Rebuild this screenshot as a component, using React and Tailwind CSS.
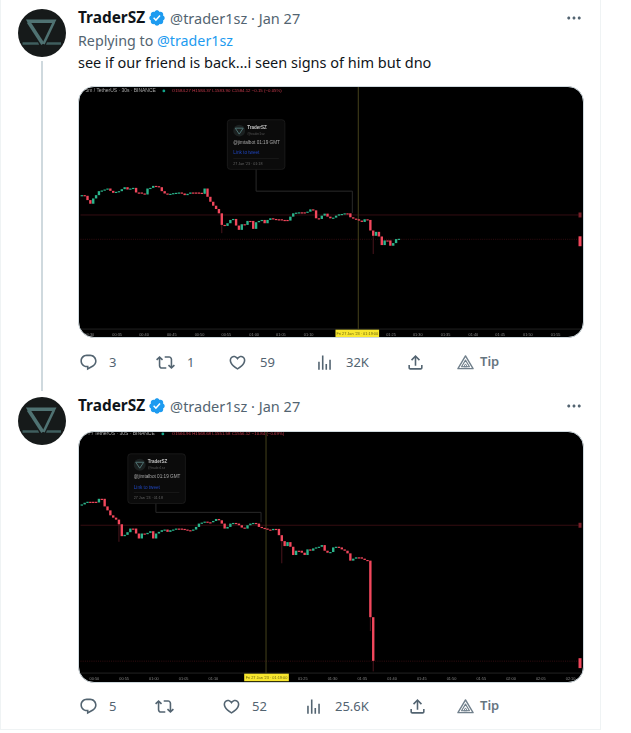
const paths = {
  reply: 'M1.751 10c0-4.42 3.584-8 8.005-8h4.366c4.49 0 8.129 3.64 8.129 8.13 0 2.96-1.607 5.68-4.196 7.11l-8.054 4.46v-3.69h-.067c-4.49.1-8.183-3.51-8.183-8.01zm8.005-6c-3.317 0-6.005 2.69-6.005 6 0 3.37 2.77 6.08 6.138 6.01l.351-.01h1.761v2.3l5.087-2.81c1.951-1.08 3.163-3.13 3.163-5.36 0-3.39-2.744-6.13-6.129-6.13H9.756z',
  retweet: 'M4.5 3.88l4.432 4.14-1.364 1.46L5.5 7.55V16c0 1.1.896 2 2 2H13v2H7.5c-2.209 0-4-1.79-4-4V7.55L1.432 9.48.068 8.02 4.5 3.88zM16.5 6H11V4h5.5c2.209 0 4 1.79 4 4v8.45l2.068-1.93 1.364 1.46-4.432 4.14-4.432-4.14 1.364-1.46 2.068 1.93V8c0-1.1-.896-2-2-2z',
  heart: 'M16.697 5.5c-1.222-.06-2.679.51-3.89 2.16l-.805 1.09-.806-1.09C9.984 6.01 8.526 5.44 7.304 5.5c-1.243.07-2.349.78-2.91 1.91-.552 1.12-.633 2.78.479 4.82 1.074 1.97 3.257 4.27 7.129 6.61 3.87-2.34 6.052-4.64 7.126-6.61 1.111-2.04 1.03-3.7.477-4.82-.561-1.13-1.666-1.84-2.908-1.91zm4.187 7.69c-1.351 2.48-4.001 5.12-8.379 7.67l-.503.3-.504-.3c-4.379-2.55-7.029-5.19-8.382-7.67-1.36-2.5-1.41-4.86-.514-6.67.887-1.79 2.647-2.91 4.601-3.01 1.651-.09 3.368.56 4.798 2.01 1.429-1.45 3.146-2.1 4.796-2.01 1.954.1 3.714 1.22 4.601 3.01.896 1.81.846 4.17-.514 6.67z',
  views: 'M8.75 21V3h2v18h-2zM18 21V8.5h2V21h-2zM4 21l.004-10h2L6 21H4zm9.248 0v-7h2v7h-2z',
  share: 'M12 2.59l5.7 5.7-1.41 1.42L13 6.41V16h-2V6.41l-3.3 3.3-1.41-1.42L12 2.59zM21 15l-.02 3.51c0 1.38-1.12 2.49-2.5 2.49H5.5C4.11 21 3 19.88 3 18.5V15h2v3.5c0 .28.22.5.5.5h12.98c.28 0 .5-.22.5-.5L19 15h2z',
  badge: 'M22.25 12c0-1.43-.88-2.67-2.19-3.34.46-1.39.2-2.9-.81-3.91s-2.52-1.27-3.91-.81c-.66-1.31-1.91-2.19-3.34-2.19s-2.67.88-3.33 2.19c-1.4-.46-2.91-.2-3.92.81s-1.26 2.52-.8 3.91c-1.31.67-2.2 1.91-2.2 3.34s.89 2.67 2.2 3.34c-.46 1.39-.21 2.9.8 3.91s2.52 1.26 3.91.81c.67 1.31 1.91 2.19 3.34 2.19s2.68-.88 3.34-2.19c1.39.45 2.9.2 3.91-.81s1.27-2.52.81-3.91c1.31-.67 2.19-1.91 2.19-3.34zm-11.71 4.2L6.8 12.46l1.41-1.42 2.26 2.26 4.8-5.23 1.47 1.36-6.2 6.77z',
  more: 'M3 12c0-1.1.9-2 2-2s2 .9 2 2-.9 2-2 2-2-.9-2-2zm9 2c1.1 0 2-.9 2-2s-.9-2-2-2-2 .9-2 2 .9 2 2 2zm7 0c1.1 0 2-.9 2-2s-.9-2-2-2-2 .9-2 2 .9 2 2 2z',
}

// candle closes, in 3x crop units
const series1 = [330,332,345,356,340,330,318,316,313,310,317,323,320,318,312,306,313,310,308,322,322,325,328,310,308,302,303,306,318,325,328,326,324,323,322,325,330,326,322,322,322,323,326,310,335,350,362,372,385,420,423,415,405,402,422,435,418,420,408,408,432,412,408,405,415,405,400,402,403,403,405,405,407,395,385,383,382,382,383,380,373,376,400,402,392,386,395,400,398,392,388,387,385,385,397,401,403,407,411,403,405,437,453,441,455,481,467,467,483,475,463,462]
const series2 = [222,217,214,214,214,216,205,205,228,240,255,262,268,282,318,314,306,295,295,310,325,310,312,308,303,325,310,305,300,298,305,300,298,295,295,296,298,300,300,298,290,280,277,274,276,276,272,266,270,280,295,290,280,278,280,285,292,295,285,280,278,280,290,293,295,298,300,296,296,315,333,348,336,350,375,362,362,368,375,358,362,355,352,350,345,362,368,366,352,350,352,358,362,370,392,386,382,382,386,390,392,563,695]

function Candles({ closes, step, wicks }) {
  return closes.map((c, i) => {
    const x = 1.3 + i * step
    const open = i === 0 ? c + 2 : closes[i - 1]
    const up = c < open
    const top = Math.min(c, open) / 3 - 1
    const bottom = Math.max(c, open) / 3 - 1
    const color = up ? '#2bb58c' : '#f2475c'
    return (
      <g key={i}>
        {wicks[i] && <line x1={x} x2={x} y1={bottom} y2={wicks[i] / 3 - 1} stroke="#5e1a24" strokeWidth="0.8" />}
        <rect x={x - 1.2} y={top} width="2.4" height={Math.max(bottom - top, 1.2)} fill={color} />
      </g>
    )
  })
}

function Tooltip({ x, y }) {
  return (
    <g transform={`translate(${x} ${y})`} fontFamily="'Liberation Sans', sans-serif">
      <rect x="0" y="0" width="58" height="50" rx="3" fill="#0b0b0b" stroke="#222222" strokeWidth="0.7" />
      <circle cx="12" cy="11" r="6" fill="#1b2020" />
      <path d="M8 8.5h8l-4 6z" fill="none" stroke="#4f7272" strokeWidth="1" />
      <text x="20" y="9.5" fontSize="4.6" fontWeight="700" fill="#c4c4c4">TraderSZ</text>
      <text x="20" y="15.5" fontSize="3.4" fill="#555555">@trader1sz</text>
      <text x="6" y="24.5" fontSize="4.7" fill="#a8a8a8">@jimtalbot 01:19 GMT</text>
      <text x="6" y="35" fontSize="4.7" fill="#1f46c0">Link to tweet</text>
      <line x1="6" x2="52" y1="39" y2="39" stroke="#222222" strokeWidth="0.6" />
      <text x="6" y="46" fontSize="3.7" fill="#666666">27 Jan '23 · 01:18</text>
    </g>
  )
}

function Chart({ data }) {
  const h = data.height
  return (
    <div className="h-[252px] overflow-hidden rounded-2xl border border-[#cfd9de] bg-black">
      <svg viewBox={`0 0 505 ${h}`} className="block h-full w-full blur-[0.3px]" fontFamily="'Liberation Sans', sans-serif">
        <text x={data.titleX} y={data.legendY} fontSize="5" fill="#a8a8a8">{data.title}</text>
        <circle cx={data.dotX} cy={data.legendY - 1.5} r="1.4" fill="#12a58a" />
        <text x={data.ohlcX} y={data.legendY} fontSize="4.4" fill="#c63a4c">{data.ohlc}</text>

        <line x1="0" x2="502" y1={data.lineY} y2={data.lineY} stroke="#421016" strokeWidth="0.8" />
        <line x1="0" x2="502" y1={data.dotY} y2={data.dotY} stroke="#421016" strokeWidth="0.8" strokeDasharray="1 1.2" />
        <rect x="502" y={data.lineY - 2.5} width="3" height="5" fill="#7a2029" />
        <rect x="502" y={data.dotY - 3} width="3" height="10" fill="#f2475c" />

        <path d={data.connector} fill="none" stroke="#2e2e2e" strokeWidth="0.9" />
        <Tooltip x={data.tipX} y={data.tipY} />
        <line x1={data.crossX} x2={data.crossX} y1="0" y2={data.axisY} stroke="#4d4a1f" strokeWidth="0.9" />
        <Candles closes={data.closes} step={data.step} wicks={data.wicks} />

        <line x1="0" x2="505" y1={data.axisY} y2={data.axisY} stroke="#2b2b2b" strokeWidth="0.8" />
        {data.ticks.map(([label, x]) => (
          <text key={label} x={x} y={data.axisY + 6.5} fontSize="3.9" textAnchor="middle" fill="#8a8a8a">{label}</text>
        ))}
        <rect x={data.yellowX} y={data.axisY + 0.6} width={data.yellowW} height="7.6" fill="#f7e62e" />
        <text x={data.yellowX + data.yellowW / 2} y={data.axisY + 6} fontSize="3.9" textAnchor="middle" fill="#6b6410">Fri 27 Jan '23 · 01:19:00</text>
      </svg>
    </div>
  )
}

function Icon({ d, className }) {
  return (
    <svg viewBox="0 0 24 24" className={className} fill="currentColor">
      <path d={d} />
    </svg>
  )
}

function TipIcon() {
  return (
    <svg viewBox="0 0 18 18" className="h-[17px] w-[17px]" fill="none" stroke="currentColor" strokeWidth="1.5" strokeLinejoin="round">
      <path d="M9 2L17 15.5H1z" />
      <path d="M9 6.5l4.2 7H4.8z" strokeWidth="1.2" />
      <path d="M9 10.5l1.8 3H7.2z" strokeWidth="1" />
    </svg>
  )
}

function Avatar() {
  return (
    <svg viewBox="0 0 48 48" className="h-12 w-12 shrink-0 rounded-full bg-[#161a1a]">
      <path d="M8 10.5h30.5l-1.8 3.5H9.8z" fill="#4f7272" />
      <path d="M10.5 13L24.8 35" stroke="#4f7272" strokeWidth="3.6" />
      <path d="M36 13L25.5 35" stroke="#4f7272" strokeWidth="2.6" />
      <path d="M4.5 33.2H20l1.2 2.6H4.5zM43 33.2H29l-1 2.6h15z" fill="#3f5e5e" />
    </svg>
  )
}

function Action({ icon, label, className }) {
  return (
    <div className={`flex items-center ${className}`}>
      {icon}
      {label && <span className="text-[13px] leading-4">{label}</span>}
    </div>
  )
}

function Actions({ items, className }) {
  return (
    <div className={`flex h-6 items-center text-[#536471] ${className}`}>
      <Action className={items[0].className} label={items[0].label} icon={<Icon d={paths.reply} className={`h-[19px] w-[19px] ${items[0].iconGap}`} />} />
      <Action className={items[1].className} label={items[1].label} icon={<Icon d={paths.retweet} className={`h-[19px] w-[19px] ${items[1].iconGap}`} />} />
      <Action className={items[2].className} label={items[2].label} icon={<Icon d={paths.heart} className={`h-[19px] w-[19px] ${items[2].iconGap}`} />} />
      <Action className={items[3].className} label={items[3].label} icon={<Icon d={paths.views} className={`h-[19px] w-[19px] ${items[3].iconGap}`} />} />
      <Action className={items[4].className} icon={<Icon d={paths.share} className="h-[19px] w-[19px]" />} />
      <div className="flex items-center gap-1.5 text-[#71808c]">
        <TipIcon />
        <span className="-mt-0.5 text-[13px] font-semibold leading-4 text-[#66757f]">Tip</span>
      </div>
    </div>
  )
}

function Header() {
  return (
    <div className="flex h-5 items-center leading-5">
      <span className="text-[15.4px] font-bold text-[#0f1419]">TraderSZ</span>
      <Icon d={paths.badge} className="ml-[3px] h-[18px] w-[18px] text-[#1d9bf0]" />
      <span className="ml-1 text-[14.5px] text-[#536471]">@trader1sz · Jan 27</span>
      <Icon d={paths.more} className="ml-auto mr-[1px] h-[18px] w-[18px] text-[#536471]" />
    </div>
  )
}

const chart1 = {
  height: 252,
  title: '5m / TetherUS · 30s · BINANCE',
  titleX: 5,
  legendY: 5.5,
  dotX: 84,
  ohlc: 'O1584.27 H1584.37 L1583.90 C1584.12 −0.15 (−0.05%)',
  ohlcX: 92,
  lineY: 129,
  dotY: 153.5,
  axisY: 244,
  crossX: 280,
  tipX: 148,
  tipY: 33,
  connector: 'M177 83V105H274V127',
  closes: series1,
  step: 2.88,
  wicks: { 49: 445, 102: 508 },
  yellowX: 257,
  yellowW: 44,
  ticks: [['00:30', 9], ['00:35', 37], ['00:40', 64], ['00:45', 92], ['00:50', 120], ['00:55', 147], ['01:00', 175], ['01:05', 202], ['01:10', 230], ['01:25', 313], ['01:30', 340], ['01:35', 368], ['01:40', 396], ['01:45', 423], ['01:50', 451], ['01:55', 479]],
}

const chart2 = {
  height: 252,
  title: 'TT / TetherUS · 30S · BINANCE',
  titleX: 4,
  legendY: 3.4,
  dotX: 83,
  ohlc: 'O1566.96 H1568.68 L1551.58 C1556.12 −10.84 (−0.69%)',
  ohlcX: 92,
  lineY: 94,
  dotY: 231,
  axisY: 243,
  crossX: 187,
  tipX: 47.7,
  tipY: 22,
  connector: 'M76 72V81H182V91',
  closes: series2,
  step: 2.88,
  wicks: { 13: 335, 70: 400, 101: 605, 102: 727 },
  yellowX: 165,
  yellowW: 45,
  ticks: [['00:50', 14], ['00:55', 44], ['01:00', 74], ['01:05', 104], ['01:10', 134], ['01:25', 224], ['01:30', 254], ['01:35', 284], ['01:40', 314], ['01:45', 344], ['01:50', 374], ['01:55', 404], ['02:00', 434], ['02:05', 464], ['02:10', 494]],
}

export default function App() {
  return (
    <div className="h-[733px] w-[631px] overflow-hidden bg-white font-['Noto_Sans',sans-serif]">
      <div className="h-[730px] w-[601px] border-x border-b border-[#eff3f4]">
        <article className="flex pl-[17px] pr-4 pt-2">
          <div className="mr-3 flex w-12 shrink-0 flex-col items-center pt-px">
            <Avatar />
            <div className="mt-1 w-0.5 flex-1 bg-[#cfd9de]" />
          </div>
          <div className="w-[506px] pb-[17px]">
            <Header />
            <div className="mt-[3px] text-[14.25px] leading-5 text-[#536471]">
              Replying to <span className="text-[#1d9bf0]">@trader1sz</span>
            </div>
            <p className="mt-px text-[14.5px] leading-5 text-[#0f1419]">see if our friend is back...i seen signs of him but dno</p>
            <div className="mt-3.5">
              <Chart data={chart1} />
            </div>
            <Actions
              className="mt-3"
              items={[
                { className: 'w-[78px] pl-px', iconGap: 'mr-[11px]', label: '3' },
                { className: 'w-[72px]', iconGap: 'mr-[12px]', label: '1' },
                { className: 'w-[87px]', iconGap: 'mr-[13px]', label: '59' },
                { className: 'w-[91px]', iconGap: 'mr-[12px]', label: '32K' },
                { className: 'w-[51px]' },
              ]}
            />
          </div>
        </article>

        <article className="flex pl-[17px] pr-4 pt-[5px]">
          <div className="mr-3 flex w-12 shrink-0 flex-col items-center pt-px">
            <Avatar />
          </div>
          <div className="w-[506px]">
            <Header />
            <div className="mt-[15px]">
              <Chart data={chart2} />
            </div>
            <Actions
              className="mt-[11px]"
              items={[
                { className: 'w-[77px] pl-px', iconGap: 'mr-[11px]', label: '5' },
                { className: 'w-[67px]', iconGap: '', label: '' },
                { className: 'w-[82px]', iconGap: 'mr-[11px]', label: '52' },
                { className: 'w-[104px]', iconGap: 'mr-[12px]', label: '25.6K' },
                { className: 'w-[49px]' },
              ]}
            />
          </div>
        </article>
      </div>
    </div>
  )
}
